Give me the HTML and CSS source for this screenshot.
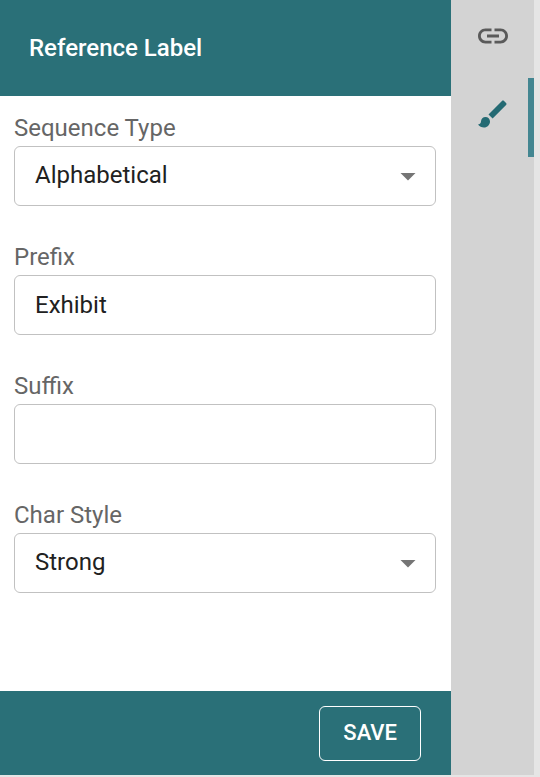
FILE: index.html
```html
<!DOCTYPE html>
<html lang="en">
<head>
<meta charset="utf-8">
<meta name="viewport" content="width=device-width, initial-scale=1">
<title>Reference Label</title>
<link rel="stylesheet" href="styles.css">
</head>
<body>
<div class="app">
  <form class="panel">
    <header class="panel-header"><h1>Reference Label</h1></header>
    <div class="fields">
      <div class="field">
        <label for="sequence">Sequence Type</label>
        <div class="select-wrap">
          <select id="sequence" class="control"><option>Alphabetical</option></select>
          <svg class="caret" viewBox="0 0 24 24" aria-hidden="true"><path d="M7 10l5 5 5-5z"/></svg>
        </div>
      </div>
      <div class="field">
        <label for="prefix">Prefix</label>
        <input id="prefix" class="control" type="text" value="Exhibit">
      </div>
      <div class="field">
        <label for="suffix">Suffix</label>
        <input id="suffix" class="control" type="text">
      </div>
      <div class="field">
        <label for="charstyle">Char Style</label>
        <div class="select-wrap">
          <select id="charstyle" class="control"><option>Strong</option></select>
          <svg class="caret" viewBox="0 0 24 24" aria-hidden="true"><path d="M7 10l5 5 5-5z"/></svg>
        </div>
      </div>
    </div>
    <footer class="panel-footer"><button class="save" type="button">SAVE</button></footer>
  </form>
  <nav class="rail">
    <button class="tab" type="button" aria-label="Link">
      <svg viewBox="0 0 24 24"><path d="M3.9 12c0-1.710 1.390-3.100 3.100-3.100h4V7H7c-2.760 0-5 2.240-5 5s2.240 5 5 5h4v-1.900H7c-1.710 0-3.100-1.390-3.100-3.100zM8 13h8v-2H8v2zm9-6h-4v1.900h4c1.710 0 3.100 1.390 3.100 3.100s-1.390 3.100-3.100 3.100h-4V17h4c2.760 0 5-2.240 5-5s-2.240-5-5-5z"/></svg>
    </button>
    <button class="tab active" type="button" aria-label="Style">
      <svg viewBox="0 0 24 24"><path d="M7 14c-1.660 0-3 1.340-3 3 0 1.310-1.160 2-2 2 .92 1.220 2.490 2 4 2 2.210 0 4-1.790 4-4 0-1.660-1.340-3-3-3zm13.710-9.370l-1.340-1.340c-.39-.39-1.020-.39-1.410 0L9 12.250 11.750 15l8.960-8.960c.39-.39.39-1.020 0-1.410z"/></svg>
    </button>
  </nav>
</div>
</body>
</html>
```
FILE: styles.css
```css
* {
  box-sizing: border-box;
}

body {
  margin: 0;
  background: #e5e5e5;
  font-family: Roboto, "Liberation Sans", sans-serif;
}

.app {
  display: flex;
  min-height: 100vh;
  padding: 0 6px 2px 0;
}

.panel {
  flex: 1;
  display: flex;
  flex-direction: column;
  background: #fff;
}

.panel-header {
  padding: 30px 29px;
  background: #2a7078;
  color: #fff;
}

h1 {
  margin: 0;
  font-size: 24px;
  font-weight: 500;
  line-height: 36px;
}

.fields {
  flex: 1;
  display: flex;
  flex-direction: column;
  gap: 33px;
  padding: 14px 15px 14px 14px;
}

.field label {
  display: block;
  color: #666;
  font-size: 24px;
  line-height: 36px;
}

.control {
  appearance: none;
  display: block;
  width: 100%;
  height: 60px;
  padding: 0 20px;
  border: 1px solid #c1c1c1;
  border-radius: 6px;
  background: #fff;
  color: #212121;
  font-family: inherit;
  font-size: 24px;
}

select.control {
  padding-bottom: 2px;
}

.select-wrap {
  position: relative;
}

.caret {
  position: absolute;
  top: 12px;
  right: 10px;
  width: 36px;
  height: 36px;
  fill: #757575;
  pointer-events: none;
}

.panel-footer {
  display: flex;
  justify-content: flex-end;
  padding: 15px 30px 14px;
  background: #2a7078;
}

.save {
  height: 55px;
  padding: 0 23px 2px;
  border: 1px solid #fff;
  border-radius: 6px;
  background: transparent;
  color: #fff;
  font-family: inherit;
  font-size: 22px;
  font-weight: 500;
}

.rail {
  display: flex;
  flex-direction: column;
  width: 83px;
  background: #d3d3d3;
}

.tab {
  display: flex;
  align-items: center;
  justify-content: center;
  height: 78px;
  padding: 0 0 6px;
  border: 0;
  background: none;
  color: #5a5a5a;
}

.tab.active {
  height: 79px;
  padding: 0 0 7px 6px;
  border-right: 6px solid #438691;
  color: #246a73;
}

.tab svg {
  width: 36px;
  height: 36px;
  fill: currentColor;
}
```
